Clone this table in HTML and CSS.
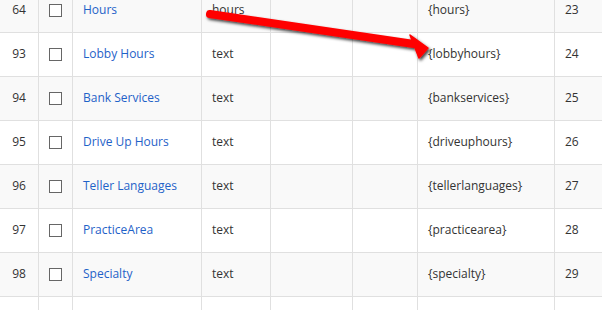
FILE: index.html
```html
<!DOCTYPE html>
<html>
<head>
<meta charset="utf-8">
<link rel="stylesheet" href="styles.css">
</head>
<body>
<div class="viewport">
<table class="fields">
  <colgroup>
    <col class="c-id"><col class="c-chk"><col class="c-name"><col class="c-type"><col class="c-blank"><col class="c-blank2"><col class="c-tag"><col class="c-ord">
  </colgroup>
  <tbody>
    <tr class="alt"><td class="num">64</td><td class="chk"><span class="box"></span></td><td><a href="#">Hours</a></td><td>hours</td><td></td><td></td><td>{hours}</td><td>23</td></tr>
    <tr><td class="num">93</td><td class="chk"><span class="box"></span></td><td><a href="#">Lobby Hours</a></td><td>text</td><td></td><td></td><td>{lobbyhours}</td><td>24</td></tr>
    <tr class="alt"><td class="num">94</td><td class="chk"><span class="box"></span></td><td><a href="#">Bank Services</a></td><td>text</td><td></td><td></td><td>{bankservices}</td><td>25</td></tr>
    <tr><td class="num">95</td><td class="chk"><span class="box"></span></td><td><a href="#">Drive Up Hours</a></td><td>text</td><td></td><td></td><td>{driveuphours}</td><td>26</td></tr>
    <tr class="alt"><td class="num">96</td><td class="chk"><span class="box"></span></td><td><a href="#">Teller Languages</a></td><td>text</td><td></td><td></td><td>{tellerlanguages}</td><td>27</td></tr>
    <tr><td class="num">97</td><td class="chk"><span class="box"></span></td><td><a href="#">PracticeArea</a></td><td>text</td><td></td><td></td><td>{practicearea}</td><td>28</td></tr>
    <tr class="alt"><td class="num">98</td><td class="chk"><span class="box"></span></td><td><a href="#">Specialty</a></td><td>text</td><td></td><td></td><td>{specialty}</td><td>29</td></tr>
    <tr><td class="num"></td><td class="chk"></td><td></td><td></td><td></td><td></td><td></td><td></td></tr>
  </tbody>
</table>
<svg class="arrow" width="602" height="80" viewBox="0 0 602 80">
  <defs>
    <filter id="sh" x="-10%" y="-50%" width="120%" height="200%">
      <feDropShadow dx="1.5" dy="2" stdDeviation="1.5" flood-color="#000" flood-opacity="0.75"/>
    </filter>
  </defs>
  <g filter="url(#sh)">
    <line x1="210" y1="14" x2="414" y2="44" stroke="#f00" stroke-width="8" stroke-linecap="round"/>
    <polygon points="410,35 428,48 419,58" fill="#f00" stroke="#f00" stroke-width="1.5" stroke-linejoin="round"/>
  </g>
</svg>
</div>
</body>
</html>
```

FILE: styles.css
```css
html, body {
  margin: 0;
  padding: 0;
  background: #fff;
}
.viewport {
  position: relative;
  width: 602px;
  height: 310px;
  overflow: hidden;
}
.fields {
  border-collapse: collapse;
  table-layout: fixed;
  width: 660px;
  margin-top: -12px;
  margin-left: -1px;
  font-family: "Open Sans", "DejaVu Sans", sans-serif;
  font-size: 12px;
  color: #333;
}
.c-id { width: 39px; }
.c-chk { width: 34px; }
.c-name { width: 129px; }
.c-type { width: 69px; }
.c-blank { width: 82px; }
.c-blank2 { width: 65px; }
.c-tag { width: 137px; }
.c-ord { width: 105px; }
.fields td {
  height: 41px;
  padding: 0 0 2px 10px;
  border: 1px solid #e0e0e0;
  vertical-align: middle;
  white-space: nowrap;
}
.fields tr.alt td {
  background: #f9f9f9;
}
.fields td.num {
  text-align: center;
  padding: 0 0 2px 0;
}
.fields td.chk {
  padding: 0 0 1px 10px;
}
.box {
  display: block;
  width: 11px;
  height: 11px;
  border: 1px solid #666;
  background: #fff;
}
.fields a {
  color: #1f62c8;
  text-decoration: none;
}
.arrow {
  position: absolute;
  left: 0;
  top: 0;
}
```
